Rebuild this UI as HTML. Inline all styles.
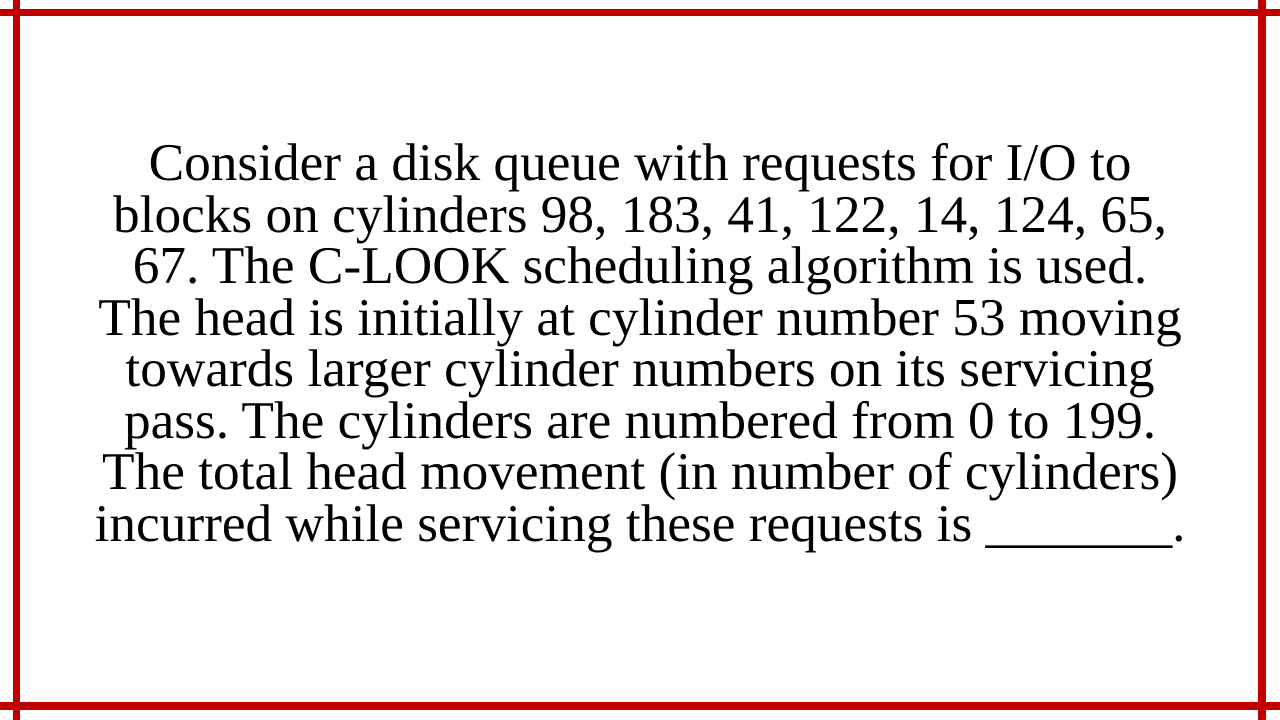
<!DOCTYPE html>
<html><head><style>
body{margin:0;width:1280px;height:720px;background:#fff;position:relative;overflow:hidden}
.l{position:absolute;background:#c00000}
.t{position:absolute;left:0;width:1280px;top:137px;text-align:center;font-family:"Liberation Serif",serif;font-size:53.3px;line-height:51.5px;color:#000;white-space:nowrap}
</style></head><body>
<div class="l" style="left:0;top:9px;width:1280px;height:7px"></div>
<div class="l" style="left:0;top:702px;width:1280px;height:8px"></div>
<div class="l" style="left:13px;top:0;width:7px;height:720px"></div>
<div class="l" style="left:1258px;top:0;width:8px;height:720px"></div>
<div class="t">Consider a disk queue with requests for I/O to<br>blocks on cylinders 98, 183, 41, 122, 14, 124, 65,<br>67. The C-LOOK scheduling algorithm is used.<br>The head is initially at cylinder number 53 moving<br>towards larger cylinder numbers on its servicing<br>pass. The cylinders are numbered from 0 to 199.<br>The total head movement (in number of cylinders)<br>incurred while servicing these requests is _______.</div>
</body></html>
